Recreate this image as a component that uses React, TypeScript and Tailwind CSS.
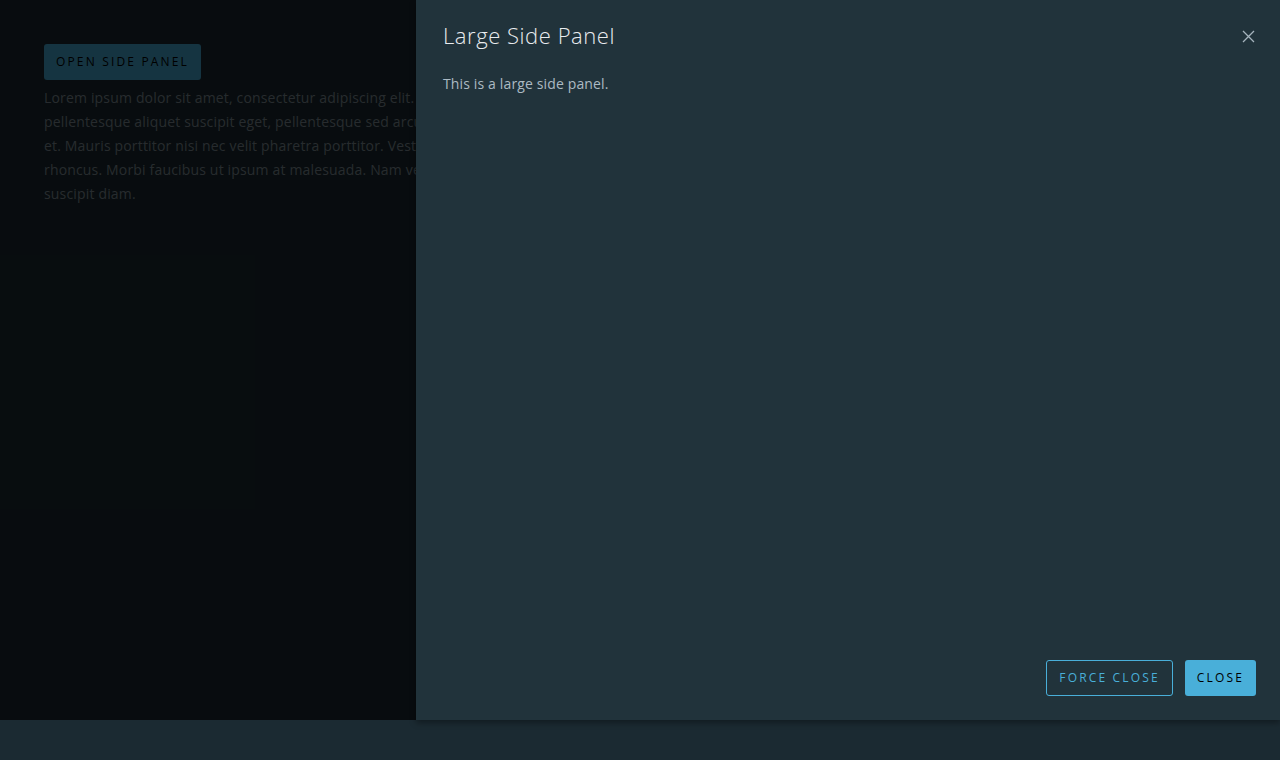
import React from "react";

export default function App() {
  const font = { fontFamily: "'Open Sans', Lato, sans-serif" };
  return (
    <div className="w-[1280px] h-[760px] bg-[#1b2a32] overflow-hidden" style={font}>
      <div className="relative h-[720px] bg-[#1b2a32]">
        <div className="p-[44px] pt-[44px]">
          <button className="h-[36px] px-[12px] rounded-[3px] bg-[#49afd9] text-[12px] font-medium tracking-[0.18em] text-[#000] uppercase">
            Open Side Panel
          </button>
          <div className="mt-[6px] w-[372px] overflow-hidden text-[14px] leading-[24px] tracking-[0.012em] text-[#84929b] whitespace-nowrap">
            <div>Lorem ipsum dolor sit amet, consectetur adipiscing elit. Sed a massa quis sapien ultricies vestibulum.</div>
            <div>pellentesque aliquet suscipit eget, pellentesque sed arcu. Nullam id tortor lacus, vel hendrerit leo.</div>
            <div>et. Mauris porttitor nisi nec velit pharetra porttitor. Vestibulum vulputate sollicitudin dolor.</div>
            <div>rhoncus. Morbi faucibus ut ipsum at malesuada. Nam vestibulum felis sit amet metus finibus.</div>
            <div>suscipit diam.</div>
          </div>
        </div>
        <div className="absolute inset-0 bg-[rgba(0,0,0,0.7)]" />
        <div className="absolute top-0 right-0 bottom-0 w-[864px] bg-[#21333b] flex flex-col shadow-[0_3px_6px_rgba(0,0,0,0.35)]">
          <div className="flex items-start justify-between pl-[27px] pr-[24px] pt-[19px]">
            <h1 className="text-[22px] font-light leading-[32px] tracking-[0.025em] text-[#e9ecef]">Large Side Panel</h1>
            <button className="mt-[9px] w-[16px] h-[16px] flex items-center justify-center text-[#a5b4bd]" aria-label="Close">
              <svg width="13" height="13" viewBox="0 0 13 13" fill="none" stroke="currentColor" strokeWidth="1.3">
                <path d="M1 1 L12 12 M12 1 L1 12" />
              </svg>
            </button>
          </div>
          <div className="flex-1 pl-[27px] pt-[21px] text-[14px] leading-[24px] tracking-[0.01em] text-[#acbac3]">
            This is a large side panel.
          </div>
          <div className="flex justify-end gap-[12px] px-[24px] pb-[24px]">
            <button className="h-[36px] px-[12px] rounded-[3px] border border-[#49afd9] text-[#49afd9] text-[12px] font-medium tracking-[0.18em] uppercase">
              Force Close
            </button>
            <button className="h-[36px] px-[12px] rounded-[3px] bg-[#49afd9] text-[#000] text-[12px] font-medium tracking-[0.18em] uppercase">
              Close
            </button>
          </div>
        </div>
      </div>
    </div>
  );
}
